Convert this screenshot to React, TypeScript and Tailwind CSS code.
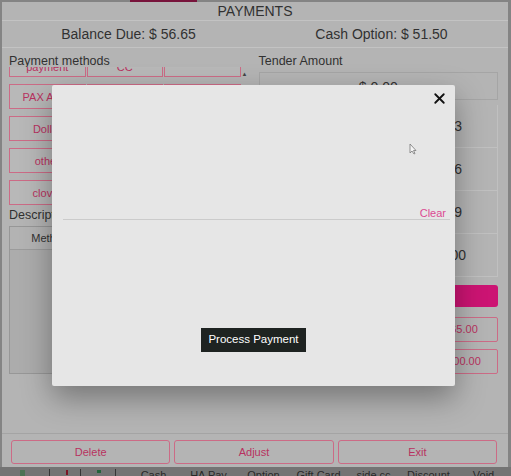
import { X } from 'lucide-react';

const methodRows = [
  ['payment', 'CC', ''],
  ['PAX A920', 'Dejavoo', 'Cash App'],
  ['Dollar', 'Check', 'Zelle'],
  ['other', 'Venmo', 'House'],
  ['clover', 'Square', 'Stripe'],
];

const keys = ['1', '2', '3', '4', '5', '6', '7', '8', '9', '.', '0', '00'];
const quickCash = ['$ 57.00', '$ 60.00', '$ 65.00', '$ 70.00', '$ 80.00', '$ 100.00'];
const tabs = ['Cash', 'HA Pay', 'Option', 'Gift Card', 'side cc', 'Discount', 'Void'];

function PinkButton({ label }: { label: string }) {
  return (
    <button className="flex h-[24px] items-center justify-center rounded-[3px] border border-[#ff86a8] text-[11px] text-[#e63e78]">
      {label}
    </button>
  );
}

export default function App() {
  return (
    <div className="relative h-[476px] w-[511px] overflow-hidden bg-[#a6a6a6] font-['Liberation_Sans',Arial,sans-serif] text-[#3e3e3e]">
      {/* top strip with active tab */}
      <div className="flex h-[2px]">
        <div className="ml-[130px] h-[2px] w-[67px] bg-[#96194b]" />
      </div>

      {/* payments panel */}
      <div className="ml-[2px] flex h-[465px] w-[506px] flex-col bg-[#e2e2e2]">
        <div className="flex h-[19px] items-center justify-center border-b border-[#f4f4f4] text-[14px] leading-none">
          PAYMENTS
        </div>
        <div className="grid h-[27px] grid-cols-2 items-center border-b border-[#f4f4f4] text-[14px] leading-none">
          <div className="text-center">Balance Due: $ 56.65</div>
          <div className="text-center">Cash Option: $ 51.50</div>
        </div>

        <div className="grid grid-cols-2 gap-[10px] pl-[7px] pr-[10px] pt-[6px]">
          {/* left column */}
          <div className="flex flex-col">
            <div className="h-[13px] text-[12.5px] leading-[14px]">Payment methods</div>
            <div className="flex h-[140px] overflow-hidden">
              <div className="mt-[-15px] grid flex-1 grid-cols-3 content-start gap-x-[1px] gap-y-[7px]">
                {methodRows.flat().map((m, i) => (
                  <div
                    key={i}
                    className={`flex h-[25px] justify-center border border-[#ff86a8] bg-[#e6e6e6] text-[11px] leading-[12px] text-[#e63e78] ${
                      i < 3 ? 'items-end pb-[3px]' : 'items-center'
                    }`}
                  >
                    {m}
                  </div>
                ))}
              </div>
              <div className="flex w-[8px] justify-center pt-[3px] text-[6px] text-[#555]">▲</div>
            </div>
            <div className="mt-[1px] h-[14px] text-[12.5px] leading-[14px]">Description</div>
            <div className="mt-[4px] flex h-[148px] flex-col border border-[#bdbdbd] bg-[#d8d8d8]">
              <div className="grid h-[23px] grid-cols-3 items-center border-b border-[#c2c2c2] bg-[#e0e0e0] text-[11px]">
                <div className="text-center">Method</div>
                <div className="text-center">Amount</div>
                <div className="text-center">Tip</div>
              </div>
            </div>
          </div>

          {/* right column */}
          <div className="flex flex-col">
            <div className="h-[14px] text-[12.5px] leading-[14px]">Tender Amount</div>
            <div className="mt-[4px] flex h-[28px] items-start justify-center border border-[#cfcfcf] pt-[4px] text-[14px]">
              $ 0.00
            </div>
            <div className="mt-[5px] grid grid-cols-3 gap-x-[2px]">
              {keys.map((k) => (
                <div
                  key={k}
                  className="flex h-[43px] items-center justify-center border-b border-r border-[#f0f0f0] text-[14px]"
                >
                  {k}
                </div>
              ))}
            </div>
            <button className="mt-[8px] h-[22px] rounded-[3px] bg-[#ff1990] text-[12px] text-white">Pay</button>
            <div className="mt-[10px] grid grid-cols-3 gap-x-[4px] gap-y-[7px]">
              {quickCash.map((q) => (
                <div
                  key={q}
                  className="flex h-[25px] items-center justify-center rounded-[2px] border border-[#ff86a8] text-[11px] text-[#e63e78]"
                >
                  {q}
                </div>
              ))}
            </div>
          </div>
        </div>

        <div className="flex-1" />
        <div className="grid grid-cols-3 gap-[4px] border-t border-[#cdcdcd] pb-[3px] pl-[9px] pr-[11px] pt-[6px]">
          <PinkButton label="Delete" />
          <PinkButton label="Adjust" />
          <PinkButton label="Exit" />
        </div>
      </div>

      {/* bottom tab bar peeking out */}
      <div className="flex h-[9px] items-start overflow-hidden bg-[#929292] pt-[2px] text-[11px] leading-[12px] text-[#333]">
        <div className="ml-[20px] mt-[1px] h-[6px] w-[10px] bg-[#5f8f6a]" />
        <div className="ml-[24px] h-[8px] w-[1px] bg-[#444]" />
        <div className="ml-[16px] mt-[1px] h-[5px] w-[5px] bg-[#9b1b30]" />
        <div className="ml-[12px] h-[8px] w-[1px] bg-[#444]" />
        <div className="ml-[16px] mt-[1px] h-[3px] w-[8px] bg-[#2e7d4a]" />
        <div className="ml-[14px] h-[8px] w-[1px] bg-[#444]" />
        <div className="ml-[11px] flex">
          {tabs.map((t) => (
            <span key={t} className="w-[55px] whitespace-nowrap text-center">
              {t}
            </span>
          ))}
        </div>
      </div>

      {/* backdrop */}
      <div className="absolute inset-0 bg-black/20" />

      {/* signature modal */}
      <div className="absolute left-[52px] top-[85px] flex h-[301px] w-[403px] flex-col rounded-[2px] bg-[#e6e6e6] shadow-[0_12px_30px_rgba(0,0,0,0.35)]">
        <div className="flex h-[24px] justify-end pr-[7px] pt-[5px]">
          <X size={17} strokeWidth={2.6} color="#111" />
        </div>
        <div className="relative ml-[11px] mr-[5px] flex h-[111px] flex-col items-end justify-end border-b border-[#cbcbcb]">
          <svg className="absolute left-[346px] top-[34px]" width="8" height="12" viewBox="0 0 8 12">
            <path d="M1 1 L1 10 L3 8 L5 11 L6 10.5 L4.5 7.5 L7 7.5 Z" fill="#f5f5f5" stroke="#777" strokeWidth="0.8" />
          </svg>
          <span className="pr-[4px] text-[11px] leading-[12px] text-[#dc4a92]">Clear</span>
        </div>
        <div className="flex flex-1 items-end justify-center pb-[34px]">
          <button className="h-[24px] w-[105px] bg-[#1e2321] text-[11.5px] text-white">Process Payment</button>
        </div>
      </div>
    </div>
  );
}
